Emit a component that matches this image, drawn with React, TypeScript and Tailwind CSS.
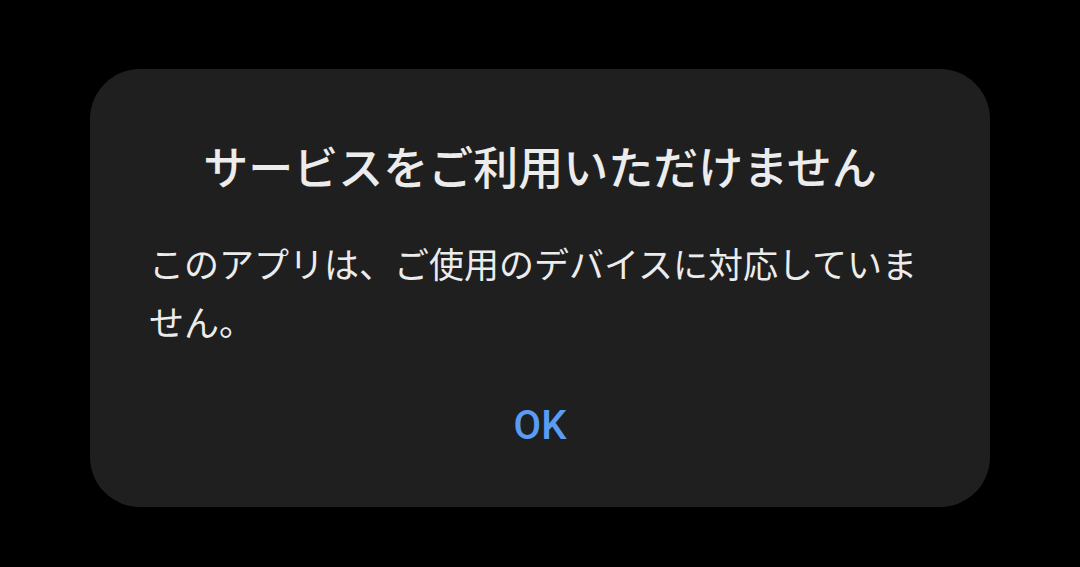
export default function App() {
  return (
    <div className="flex h-[567px] w-[1080px] justify-center bg-black pt-[69px] font-['Noto_Sans_CJK_JP','Noto_Sans',sans-serif]">
      <div className="flex h-[438px] w-[900px] flex-col rounded-[50px] bg-[#1f1f1f] px-[59px] pt-[68px]">
        <h1 className="text-center text-[45px] font-medium leading-[57px] text-[#ececec]">
          サービスをご利用いただけません
        </h1>
        <p className="mt-[40px] text-[35px] leading-[58px] text-[#ececec]">
          このアプリは、ご使用のデバイスに対応していません。
        </p>
        <div className="mt-[53px] flex justify-center">
          <button className="font-['Roboto',sans-serif] text-[40px] font-medium leading-[46px] text-[#5a9cf5]">
            OK
          </button>
        </div>
      </div>
    </div>
  );
}
